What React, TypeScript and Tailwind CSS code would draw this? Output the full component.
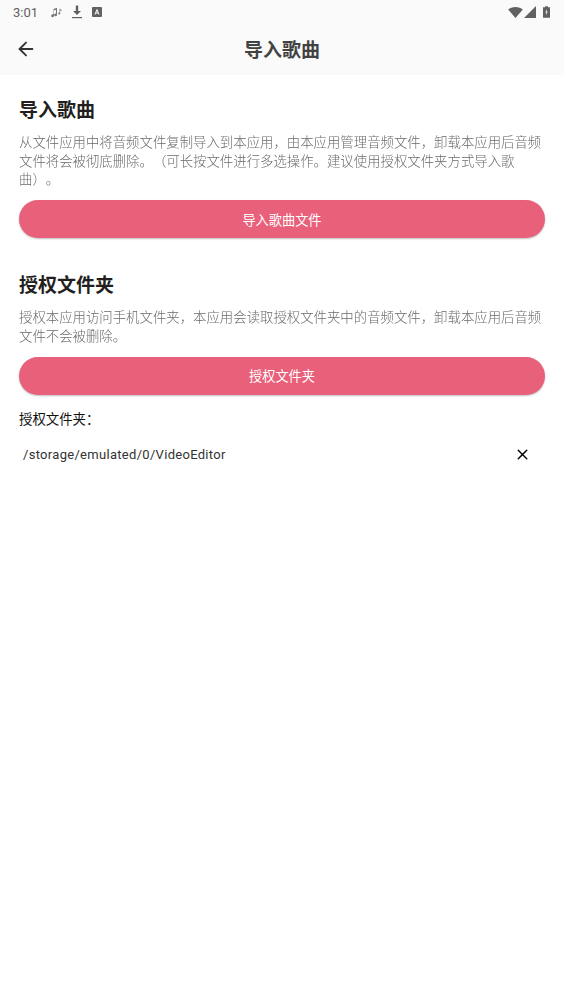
import { ArrowLeft, X } from 'lucide-react';

const cjk = "font-['Roboto','Noto_Sans_CJK_SC',sans-serif] [text-spacing-trim:space-all]";

function StatusBar() {
  return (
    <div className="flex items-center h-6 pl-[13px] pr-[14px] bg-[#fafafa] text-[#616161]">
      <span className="text-[13px] leading-none w-[38px]">3:01</span>
      <svg viewBox="0 0 12 12" className="w-3 h-3" fill="#757575">
        <path d="M1 8.5a1.4 1.4 0 1 0 2 1.2V4.5l2-.8v3.8a1.4 1.4 0 1 0 1 1.2V1.8L2.6 3v5.2A1.6 1.6 0 0 0 1 8.5z" />
        <path d="M8 6.5a1 1 0 1 0 1.2 1V4.2l1.3 1V4L8.6 2.6v3.8z" />
      </svg>
      <svg viewBox="0 0 12 14" className="w-3 h-[14px] ml-[8px]" fill="#616161">
        <path d="M4.8 0.5h2.4v5.5H10L6 10 2 6h2.8z" />
        <rect x="1" y="12" width="10" height="1.2" />
      </svg>
      <svg viewBox="0 0 10 10" className="w-[10px] h-[10px] ml-[9px]">
        <rect width="10" height="10" rx="1" fill="#616161" />
        <path d="M3 7.5 5 2.5l2 5M3.8 6h2.4" stroke="#fff" strokeWidth="1" fill="none" />
      </svg>
      <div className="flex-1" />
      <svg viewBox="0 0 16 12" className="w-[15px] h-[11px]" fill="#616161">
        <path d="M0 2.6C2 1 4.8 0 8 0s6 1 8 2.6L8 12z" />
      </svg>
      <svg viewBox="0 0 12 12" className="w-3 h-3 ml-[1px]" fill="#616161">
        <path d="M12 0v12H0z" />
      </svg>
      <svg viewBox="0 0 8 13" className="w-[7px] h-3 ml-[7px]">
        <path d="M2.4 0h3.2v1.2H8V13H0V1.2h2.4z" fill="#616161" />
        <path d="M4.6 3 2.6 7.2h1.3L3.4 10.5l2-4.5H4.1z" fill="#fafafa" />
      </svg>
    </div>
  );
}

function Section({ title, desc, button }: { title: string; desc: string; button: string }) {
  return (
    <section>
      <h2 className="text-[19px] leading-[26px] font-bold text-[#231f20]">{title}</h2>
      <p className="mt-[10px] text-[13.4px] leading-[18.7px] font-light text-[#6a6a6a] [will-change:opacity]">{desc}</p>
      <button className="mt-[10px] w-full h-[38px] pt-[3px] rounded-full bg-[#e9607a] text-white text-[13.2px] shadow-[0_1px_2px_rgba(0,0,0,0.25)]">
        {button}
      </button>
    </section>
  );
}

export default function App() {
  return (
    <div className={`w-[564px] h-[1004px] bg-white flex flex-col ${cjk}`}>
      <StatusBar />
      <header className="relative flex items-center justify-center h-[51px] pt-[3px] bg-[#fafafa]">
        <ArrowLeft size={22} strokeWidth={2} className="absolute left-[15px] top-[14px] text-[#333333]" />
        <h1 className="text-[19px] font-bold text-[#424242]">导入歌曲</h1>
      </header>
      <main className="flex flex-col px-[19px] pt-[23px]">
        <Section
          title="导入歌曲"
          desc="从文件应用中将音频文件复制导入到本应用，由本应用管理音频文件，卸载本应用后音频文件将会被彻底删除。（可长按文件进行多选操作。建议使用授权文件夹方式导入歌曲）。"
          button="导入歌曲文件"
        />
        <div className="h-[35px]" />
        <Section
          title="授权文件夹"
          desc="授权本应用访问手机文件夹，本应用会读取授权文件夹中的音频文件，卸载本应用后音频文件不会被删除。"
          button="授权文件夹"
        />
        <p className="mt-[15px] text-[13.4px] leading-[19px] text-[#111111]">授权文件夹：</p>
        <div className="flex items-center h-[24px] mt-[14px] pl-[4px] pr-[14px]">
          <span className="text-[13px] tracking-[0.3px] text-[#333333]">/storage/emulated/0/VideoEditor</span>
          <div className="flex-1" />
          <X size={17} strokeWidth={2} className="text-black" />
        </div>
      </main>
    </div>
  );
}
